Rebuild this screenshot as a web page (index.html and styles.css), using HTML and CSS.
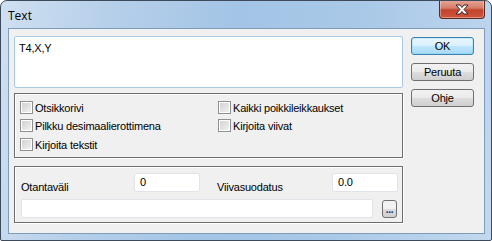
FILE: index.html
```html
<!DOCTYPE html>
<html lang="fi">
<head>
    <meta charset="UTF-8">
    <title>Text</title>
    <link rel="stylesheet" href="styles.css">
</head>
<body>
    <div class="window">
        <div class="titlebar">
            <span class="title">Text</span>
            <div class="close-btn">
                <svg width="16" height="11" viewBox="0 0 16 11">
                    <path d="M2 1h4l2 2.5 2-2.5h4l-4 4.5 4 4.5h-4l-2-2.5-2 2.5h-4l4-4.5z" fill="#fff" stroke="#3a2a28" stroke-width="1"/>
                </svg>
            </div>
        </div>
        <div class="client">
            <div class="left">
                <div class="textarea">T4,X,Y</div>

                <div class="group checks">
                    <div class="col">
                        <label class="check"><span class="box"></span>Otsikkorivi</label>
                        <label class="check"><span class="box"></span>Pilkku desimaalierottimena</label>
                        <label class="check"><span class="box"></span>Kirjoita tekstit</label>
                    </div>
                    <div class="col">
                        <label class="check"><span class="box"></span>Kaikki poikkileikkaukset</label>
                        <label class="check"><span class="box"></span>Kirjoita viivat</label>
                    </div>
                </div>

                <div class="group fields">
                    <div class="field-row">
                        <span class="lbl lbl-a">Otantaväli</span>
                        <div class="input small">0</div>
                        <span class="lbl lbl-b">Viivasuodatus</span>
                        <div class="input small">0.0</div>
                    </div>
                    <div class="field-row">
                        <div class="input wide"></div>
                        <div class="dots">...</div>
                    </div>
                </div>
            </div>

            <div class="buttons">
                <div class="btn default">OK</div>
                <div class="btn">Peruuta</div>
                <div class="btn">Ohje</div>
            </div>
        </div>
    </div>
</body>
</html>
```

FILE: styles.css
```css
body { margin: 0; background: #fff; font-family: 'Liberation Sans', Arial, sans-serif; font-size: 11px; letter-spacing: -0.2px; color: #000; }

.window {
    width: 492px;
    height: 241px;
    box-sizing: border-box;
    border: 1px solid #3c4a5a;
    border-radius: 7px 7px 2px 2px;
    background: linear-gradient(100deg, #cfe0f1 0%, #b7d0ea 20%, #a3c4e6 45%, #aac9e8 70%, #c2d8ee 100%);
    display: flex;
    flex-direction: column;
    overflow: hidden;
}

.titlebar {
    height: 27px;
    display: flex;
    align-items: flex-start;
    justify-content: space-between;
    padding: 0 6px 0 7px;
}
.title {
    font-family: 'Open Sans', 'Liberation Sans', sans-serif;
    font-size: 12px;
    letter-spacing: 0;
    margin-top: 6px;
    color: #000;
}
.close-btn {
    width: 44px;
    height: 18px;
    margin-top: -1px;
    border: 1px solid #5a2a22;
    border-top: none;
    border-radius: 0 0 4px 4px;
    background: linear-gradient(#e6a99c 0%, #d77c68 45%, #c0432b 55%, #d0563c 100%);
    box-shadow: inset 0 0 0 1px rgba(255,255,255,0.35);
    display: flex;
    align-items: center;
    justify-content: center;
}

.client {
    flex: 1;
    margin: 0 6px 6px 7px;
    border: 1px solid #7f9db9;
    background: #f0f0f0;
    display: flex;
    padding: 7px 0 0 5px;
    gap: 8px;
}

.left { width: 389px; display: flex; flex-direction: column; }

.textarea {
    height: 52px;
    box-sizing: border-box;
    background: #fff;
    border: 1px solid #a9c9e6;
    border-radius: 2px;
    padding: 5px 4px;
}

.group {
    margin-top: 5px;
    box-sizing: border-box;
    border: 1px solid #6d6d6d;
    box-shadow: inset 1px 1px 0 #fff, 1px 1px 0 #fff;
}

.checks { height: 65px; display: flex; padding: 7px 0 0 5px; }
.checks .col { display: flex; flex-direction: column; gap: 5px; }
.checks .col:first-child { width: 198px; }
.check { display: flex; align-items: center; height: 13px; gap: 2px; }
.checks .col .check:nth-child(3) { margin-top: 1px; }
.box {
    width: 11px;
    height: 11px;
    border: 1px solid #8e8f8f;
    background: linear-gradient(135deg, #cfcfcf, #f4f4f4);
    box-shadow: inset 0 0 0 1px #fff;
}

.fields {
    margin-top: 8px;
    height: 57px;
    padding: 5px 0 0 6px;
    display: flex;
    flex-direction: column;
    gap: 6px;
}
.field-row { display: flex; align-items: center; }
.lbl-a { width: 113px; margin-top: 9px; }
.lbl-b { width: 115px; margin-left: 17px; margin-top: 9px; }
.input {
    box-sizing: border-box;
    background: #fff;
    border: 1px solid #e2e3ea;
    border-radius: 2px;
    padding: 2px 5px;
}
.small { width: 66px; height: 19px; }
.wide { width: 352px; height: 19px; }
.dots {
    width: 15px;
    height: 18px;
    margin-left: 9px;
    box-sizing: border-box;
    border: 1px solid #707070;
    border-radius: 3px;
    background: linear-gradient(#f2f2f2 50%, #dddddd 50%, #cfcfcf);
    color: #1e1e78;
    font-weight: bold;
    font-size: 10px;
    text-align: center;
    line-height: 18px;
}

.buttons { display: flex; flex-direction: column; gap: 8px; padding-top: 1px; }
.btn {
    width: 63px;
    height: 18px;
    box-sizing: border-box;
    border: 1px solid #707070;
    border-radius: 3px;
    background: linear-gradient(#f2f2f2 0%, #ebebeb 48%, #dddddd 52%, #cfcfcf 100%);
    text-align: center;
    line-height: 16px;
}
.btn.default {
    border-color: #3c7fb1;
    background: linear-gradient(#eaf6fd 0%, #d9f0fc 48%, #bee6fd 52%, #a7d9f5 100%);
    box-shadow: inset 0 0 0 1px #48d3fb33;
}
```
